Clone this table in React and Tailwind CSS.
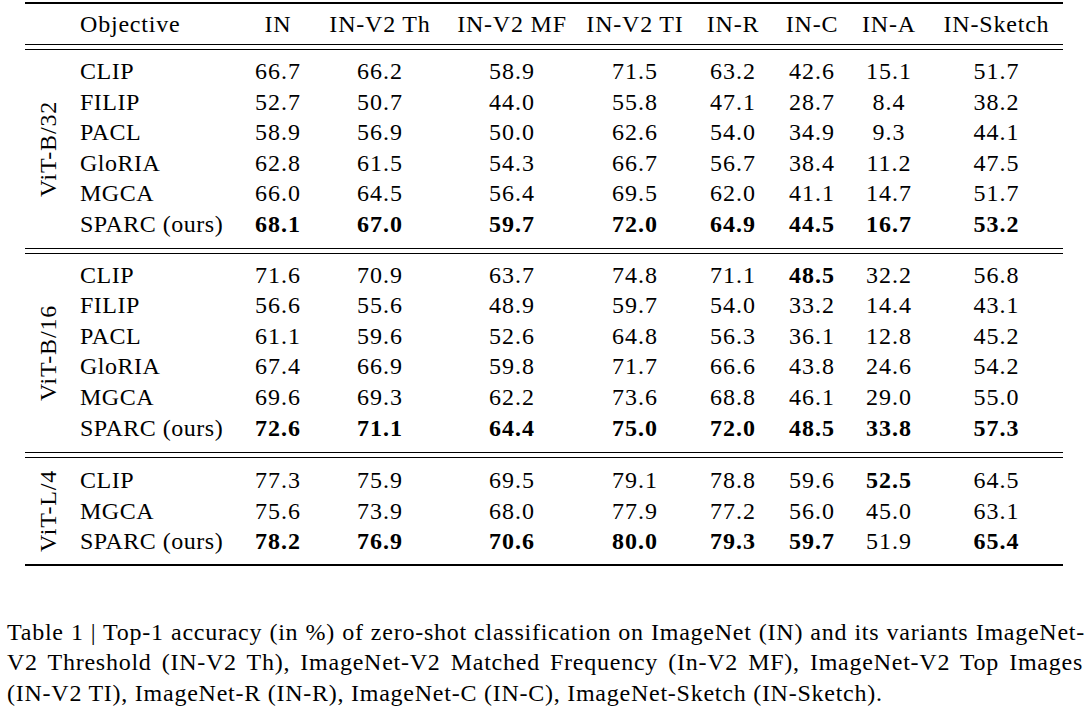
import React from "react";

const cols = "grid grid-cols-[176px_76px_128px_136px_110px_86px_72px_82px_133px]";

const headers = ["IN", "IN-V2 Th", "IN-V2 MF", "IN-V2 TI", "IN-R", "IN-C", "IN-A", "IN-Sketch"];

// value strings; "*" prefix = bold
const groups = [
  {
    label: "ViT-B/32",
    pt: "pt-[6px]",
    pb: "pb-[8px]",
    rows: [
      ["CLIP", "66.7", "66.2", "58.9", "71.5", "63.2", "42.6", "15.1", "51.7"],
      ["FILIP", "52.7", "50.7", "44.0", "55.8", "47.1", "28.7", "8.4", "38.2"],
      ["PACL", "58.9", "56.9", "50.0", "62.6", "54.0", "34.9", "9.3", "44.1"],
      ["GloRIA", "62.8", "61.5", "54.3", "66.7", "56.7", "38.4", "11.2", "47.5"],
      ["MGCA", "66.0", "64.5", "56.4", "69.5", "62.0", "41.1", "14.7", "51.7"],
      ["SPARC (ours)", "*68.1", "*67.0", "*59.7", "*72.0", "*64.9", "*44.5", "*16.7", "*53.2"],
    ],
  },
  {
    label: "ViT-B/16",
    pt: "pt-[6px]",
    pb: "pb-[9px]",
    rows: [
      ["CLIP", "71.6", "70.9", "63.7", "74.8", "71.1", "*48.5", "32.2", "56.8"],
      ["FILIP", "56.6", "55.6", "48.9", "59.7", "54.0", "33.2", "14.4", "43.1"],
      ["PACL", "61.1", "59.6", "52.6", "64.8", "56.3", "36.1", "12.8", "45.2"],
      ["GloRIA", "67.4", "66.9", "59.8", "71.7", "66.6", "43.8", "24.6", "54.2"],
      ["MGCA", "69.6", "69.3", "62.2", "73.6", "68.8", "46.1", "29.0", "55.0"],
      ["SPARC (ours)", "*72.6", "*71.1", "*64.4", "*75.0", "*72.0", "*48.5", "*33.8", "*57.3"],
    ],
  },
  {
    label: "ViT-L/4",
    pt: "pt-[7px]",
    pb: "pb-[7px]",
    rows: [
      ["CLIP", "77.3", "75.9", "69.5", "79.1", "78.8", "59.6", "*52.5", "64.5"],
      ["MGCA", "75.6", "73.9", "68.0", "77.9", "77.2", "56.0", "45.0", "63.1"],
      ["SPARC (ours)", "*78.2", "*76.9", "*70.6", "*80.0", "*79.3", "*59.7", "51.9", "*65.4"],
    ],
  },
];

function DoubleRule() {
  return <div className="h-[6px] border-y border-black" />;
}

function Group({ g }) {
  return (
    <div className="flex">
      <div className="w-[39px] flex items-center justify-center pl-[6px]">
        <span className="[writing-mode:vertical-rl] rotate-180 leading-none whitespace-nowrap tracking-[0.8px]">{g.label}</span>
      </div>
      <div className={`${g.pt} ${g.pb}`}>
        {g.rows.map((r, i) => (
          <div key={i} className={`${cols} h-[30.6px] leading-[30.6px]`}>
            <div className="pl-[16px] whitespace-nowrap tracking-[0.5px]">{r[0]}</div>
            {r.slice(1).map((v, j) => {
              const bold = v.startsWith("*");
              return (
                <div key={j} className={`text-center tracking-[1px] ${bold ? "font-bold" : ""}`}>
                  {bold ? v.slice(1) : v}
                </div>
              );
            })}
          </div>
        ))}
      </div>
    </div>
  );
}

export default function App() {
  return (
    <div
      className="w-[1087px] h-[710px] bg-white text-black text-[24px] overflow-hidden pt-[2px]"
      style={{ fontFamily: '"Liberation Serif", "Times New Roman", serif' }}
    >
      <div className="ml-[25px] w-[1038px]">
        <div className="h-[2px] bg-black" />
        <div className="flex h-[40px] items-center">
          <div className="w-[39px]" />
          <div className={`${cols}`}>
            <div className="pl-[16px] tracking-[0.8px]">Objective</div>
            {headers.map((h) => (
              <div key={h} className="text-center whitespace-nowrap tracking-[0.8px]">{h}</div>
            ))}
          </div>
        </div>
        <DoubleRule />
        {groups.map((g, i) => (
          <React.Fragment key={g.label}>
            {i > 0 && <DoubleRule />}
            <Group g={g} />
          </React.Fragment>
        ))}
        <div className="h-[2px] bg-black" />
      </div>
      <div className="mt-[51px] pl-[7px] pr-[2px] leading-[30.5px] tracking-[0.75px]">
        <div className="[text-align-last:justify] whitespace-nowrap">
          Table 1 | Top-1 accuracy (in %) of zero-shot classification on ImageNet (IN) and its variants ImageNet-
        </div>
        <div className="[text-align-last:justify] whitespace-nowrap pr-[2px]">
          V2 Threshold (IN-V2 Th), ImageNet-V2 Matched Frequency (In-V2 MF), ImageNet-V2 Top Images
        </div>
        <div className="whitespace-nowrap">
          (IN-V2 TI), ImageNet-R (IN-R), ImageNet-C (IN-C), ImageNet-Sketch (IN-Sketch).
        </div>
      </div>
    </div>
  );
}
